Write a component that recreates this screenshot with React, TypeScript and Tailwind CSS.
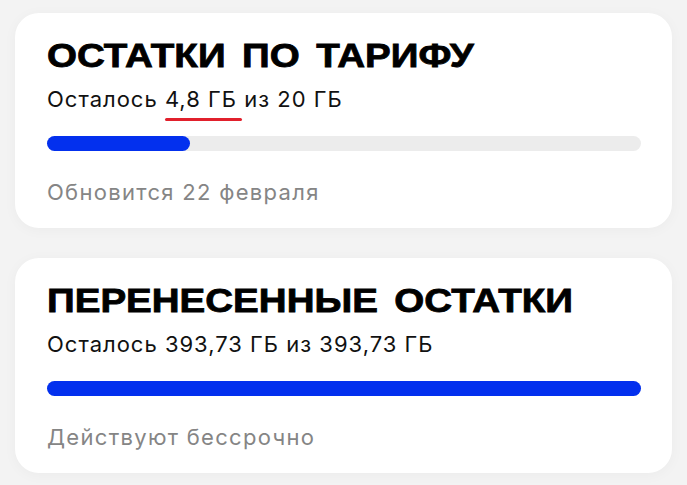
import React from "react";

type Card = {
  title: string;
  used: number;
  total: string;
  left: string;
  note: string;
  mark?: boolean;
};

const cards: Card[] = [
  {
    title: "ОСТАТКИ ПО ТАРИФУ",
    used: 24,
    left: "4,8 ГБ",
    total: "20 ГБ",
    note: "Обновится 22 февраля",
    mark: true,
  },
  {
    title: "ПЕРЕНЕСЕННЫЕ ОСТАТКИ",
    used: 100,
    left: "393,73 ГБ",
    total: "393,73 ГБ",
    note: "Действуют бессрочно",
  },
];

function BalanceCard({ card }: { card: Card }) {
  return (
    <div className="h-[215px] overflow-hidden rounded-[24px] bg-white pl-[32px] pr-[31px] pt-[25px] shadow-[0_2px_14px_rgba(0,0,0,0.035)]">
      <h2 className="w-max origin-left scale-x-[1.15] whitespace-nowrap font-['Liberation_Sans',Arial,sans-serif] text-[33.5px] font-bold leading-[36px] text-black [word-spacing:5px] [-webkit-text-stroke:0.8px_#000]">
        {card.title}
      </h2>
      <p className="mt-[12px] font-['Inter',sans-serif] text-[22px] leading-[26px] tracking-[1px] text-[#111]">
        Осталось{" "}
        <span className="relative">
          {card.left}
          {card.mark && (
            <span className="absolute -bottom-[9px] left-0 -right-[5px] h-[3px] rounded-full bg-[#e1202c]" />
          )}
        </span>{" "}
        из {card.total}
      </p>
      <div className="mt-[24px] h-[15px] w-full rounded-full bg-[#ececec]">
        <div
          className="h-full rounded-full bg-[#0330ee]"
          style={{ width: `${card.used}%` }}
        />
      </div>
      <p className="mt-[28px] font-['Inter',sans-serif] text-[22px] leading-[26px] tracking-[1.3px] text-[#858585]">
        {card.note}
      </p>
    </div>
  );
}

export default function App() {
  return (
    <div className="flex h-[485px] w-[687px] flex-col gap-[30px] bg-[#f3f3f3] px-[15px] pt-[13px]">
      {cards.map((c) => (
        <BalanceCard key={c.title} card={c} />
      ))}
    </div>
  );
}
